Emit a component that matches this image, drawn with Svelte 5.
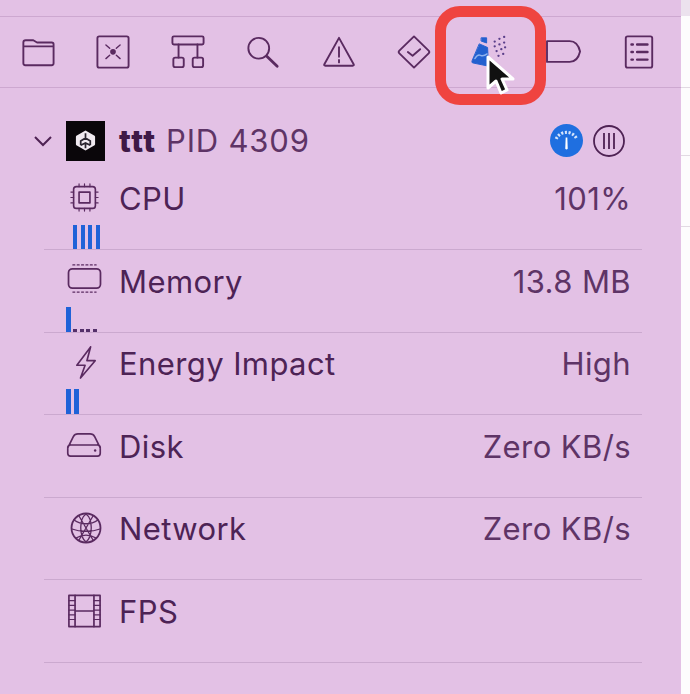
<script>
  const rows = [
    { name: 'CPU', value: '101%', icon: 'cpu', graph: 'cpu' },
    { name: 'Memory', value: '13.8 MB', icon: 'mem', graph: 'mem' },
    { name: 'Energy Impact', value: 'High', icon: 'bolt', graph: 'energy' },
    { name: 'Disk', value: 'Zero KB/s', icon: 'disk' },
    { name: 'Network', value: 'Zero KB/s', icon: 'globe' },
    { name: 'FPS', value: '', icon: 'film' }
  ];
</script>

<div class="page">
  <div class="panel">
    <div class="topstrip"></div>
    <div class="toolbar">
      <svg class="ti" viewBox="0 0 36 36"><path d="M2.500 8q0-2.500 2.500-2.500h8l4 2.500h15.500q2 0 2 2v20q0 2-2 2h-28q-2 0-2-2zM2.500 12h31.500"/></svg>
      <svg class="ti" viewBox="0 0 36 36"><rect x="1.500" y="1.500" width="33" height="33" rx="2"/><path d="M10.500 10.500l4 3.500M25.500 10.500l-4 3.500M10.500 25l4-3.500M25.500 25l-4-3.500" class="tick"/><circle cx="18" cy="17.800" r="3" class="fill"/></svg>
      <svg class="ti" viewBox="0 0 36 36"><rect x="1.500" y="1.500" width="33" height="8.500" rx="1.500"/><path d="M8 10v14M28 10v14"/><rect x="2.500" y="24" width="11" height="10" rx="2"/><rect x="23" y="24" width="11" height="10" rx="2"/></svg>
      <svg class="ti" viewBox="0 0 36 36"><circle cx="13.500" cy="14" r="11"/><path d="M22 22.500l11 10.500" class="thick"/></svg>
      <svg class="ti" viewBox="0 0 36 36"><path d="M18 3l15.500 28q.8 1.500-1 1.500h-29q-1.800 0-1-1.500zM18 13v10M18 26.500v2.500" /></svg>
      <svg class="ti" viewBox="0 0 36 36"><path d="M18 1.500l15.500 15q1.500 1.500 0 3l-15.500 15-15.500-15q-1.500-1.500 0-3zM11.500 18l5 4 8-7"/></svg>
      <svg class="ti clean" viewBox="0 0 36 36">
        <path d="M8 9.500l8.500 3.700 1 19.800-17-3.500q-1-.5-.5-2z" class="blue"/>
        <path d="M10 3h5.500v5.500l-5.500-2z" class="blue"/>
        <path d="M3 25q3-5 6-3.500t7-1.500" class="wave"/>
        <path d="M24 7h.1M29 4h.1M34 2h.1M24 12h.1M29 10h.1M34 8h.1M26 17h.1M31 15h.1M35 13h.1M28 22h.1M33 20h.1" class="dots"/>
      </svg>
      <svg class="ti" viewBox="0 0 36 36"><path d="M0 6.500h24q8.500 0 11 11q-2.500 11-11 11h-24z"/></svg>
      <svg class="ti" viewBox="0 0 36 36"><rect x="4" y="1.500" width="28" height="33" rx="2"/><path d="M10 10h1.500M16 10h11M10 18h1.500M16 18h11M10 26h1.500M16 26h11" class="lines"/></svg>
    </div>
    <div class="content">
      <div class="proc">
        <svg class="chev" viewBox="0 0 20 12"><path d="M2 2l8 8 8-8"/></svg>
        <div class="logo">
          <svg viewBox="0 0 24 24"><path d="M12 1.500l9.500 5.500q.5.300.5 1v8q0 .7-.5 1l-9.500 5.500-9.500-5.500q-.5-.3-.5-1v-8q0-.7.5-1z" class="cube"/><path d="M12 4.500v5M12 9.500l-5 3v4.500M12 9.500l5 3v4.500M7 17l5-2.500 5 2.500M12 14.500V20" class="cubeline"/></svg>
        </div>
        <div class="title"><b>ttt</b> PID 4309</div>
        <div class="ctrls">
          <svg class="gauge" viewBox="0 0 32 32"><circle cx="16" cy="16" r="16" fill="#1f6fe0"/><path d="M14.800 24l.4-11h1.600l.4 11q-1.200 1.500-2.400 0z" fill="#fff"/><path d="M6 14.500a11 11 0 0 1 20 0" fill="none" stroke="#d5e4fb" stroke-width="3" stroke-dasharray="2 1.600"/></svg>
          <svg class="bars" viewBox="0 0 32 32"><circle cx="16" cy="16" r="15"/><path d="M11 8v16M16 8v16M21 8v16"/></svg>
        </div>
      </div>

      {#each rows as r}
        <div class="row">
          <div class="line">
            <span class="ric">
              {#if r.icon === 'cpu'}
                <svg class="i-cpu" viewBox="0 0 32 32"><rect x="4" y="4" width="24" height="24" rx="3"/><rect x="10" y="10" width="12" height="12"/><path class="thin" d="M10 1v3M16 1v3M22 1v3M10 28v3M16 28v3M22 28v3M1 10h3M1 16h3M1 22h3M28 10h3M28 16h3M28 22h3"/></svg>
              {:else if r.icon === 'mem'}
                <svg class="i-mem" viewBox="0 0 36 32"><rect x="1.500" y="6" width="33" height="20" rx="4"/><path class="thin" d="M6 2h24M6 30h24" stroke-dasharray="2 2.500"/></svg>
              {:else if r.icon === 'bolt'}
                <svg class="i-bolt" viewBox="0 0 24 36"><path d="M17 1l-15 20h9l-5 14 16-19h-9l4-15"/></svg>
              {:else if r.icon === 'disk'}
                <svg class="i-disk" viewBox="0 0 38 28"><path d="M1.500 17l6-12q1.500-3 5-3h13q3.500 0 5 3l6 12M1.500 17q0-3 3-3h29q3 0 3 3v6q0 3-3 3h-29q-3 0-3-3z"/><circle cx="31" cy="20" r="1.300" class="fill"/></svg>
              {:else if r.icon === 'globe'}
                <svg class="i-globe" viewBox="0 0 32 32"><circle cx="16" cy="16" r="14.500"/><path class="thin" d="M16 2c-7 5-7 22 0 28M16 2c7 5 7 22 0 28M4 8c7 5 17 5 24 0M2 17c8 3 20 3 28 0M6 26c7-4 13-4 20 0M9 4l14 24M23 4l-14 24"/></svg>
              {:else}
                <svg class="i-film" viewBox="0 0 36 36"><rect x="1.500" y="1.500" width="33" height="33"/><path d="M8 1.500v33M28 1.500v33M8 18h20"/><path class="thin" d="M1.500 7h6.500M1.500 12h6.500M1.500 17h6.500M1.500 22h6.500M1.500 27h6.500M28 7h6.500M28 12h6.500M28 17h6.500M28 22h6.500M28 27h6.500"/></svg>
              {/if}
            </span>
            <span class="name">{r.name}</span>
            <span class="val">{r.value}</span>
          </div>
          {#if r.graph === 'cpu'}
            <div class="graph cpu"><i></i><i></i><i></i><i></i></div>
          {:else if r.graph === 'mem'}
            <div class="graph mem"><i class="tall"></i><i class="dot"></i><i class="dot"></i><i class="dot"></i><i class="dot"></i></div>
          {:else if r.graph === 'energy'}
            <div class="graph energy"><i></i><i></i></div>
          {/if}
        </div>
      {/each}
    </div>

    <div class="cursorbox">
      <svg class="cursor" viewBox="0 0 30 40"><path d="M3 2v31l8-7 5 12 6-3-5-11h11z" fill="#111" stroke="#fff" stroke-width="3" stroke-linejoin="round"/></svg>
    </div>
  </div>
  <div class="side">
    <i class="band"></i>
    <i class="mark m1"></i><i class="mark m2"></i><i class="mark m3"></i>
  </div>
</div>

<style>
  :global(body) { margin: 0; background: #fdfcfd; }
  .page {
    width: 690px; height: 694px; display: flex; overflow: hidden;
    font-family: "Inter", "Liberation Sans", sans-serif; color: #4e2253;
  }
  .panel { position: relative; width: 681px; height: 694px; background: #e3c1e5; flex: none; }
  .side { position: relative; flex: 1; }
  .side i { position: absolute; left: 0; right: 0; display: block; }
  .band { top: 0; height: 16px; background: #ece2ee; }
  .mark { height: 1px; background: #e2dae3; }
  .m1 { top: 87px; }
  .m2 { top: 155px; }
  .m3 { top: 226px; }
  .topstrip { height: 16px; border-bottom: 1.500px solid #cda8d0; }
  .toolbar {
    height: 70.500px; border-bottom: 1.500px solid #cda8d0; box-sizing: border-box;
    display: flex; align-items: center; justify-content: space-between;
    padding: 0 25px 0 21px;
  }
  .ti { width: 34px; height: 34px; fill: none; stroke: #5a2a60; stroke-width: 2; stroke-linecap: round; stroke-linejoin: round; overflow: visible; }
  .fill { fill: #5a2a60; stroke: none; }
  .tick { stroke-width: 1.500; }
  .thick { stroke-width: 3; }
  .lines { stroke-width: 2.500; }
  .blue { fill: #2360cf; stroke: #2360cf; stroke-width: 1; }
  .wave { stroke: #8fb2ee; stroke-width: 1.500; }
  .dots { stroke: #5a3f8a; stroke-width: 2.400; }
  .content { padding: 33px 39px 0 33px; }
  .proc { display: flex; align-items: center; height: 40px; margin-bottom: 7px; }
  .chev { width: 20px; height: 12px; fill: none; stroke: #4e2253; stroke-width: 2; margin-right: 13px; flex: none; }
  .logo { width: 39px; height: 40px; background: #0a060a; flex: none; margin-right: 14px; display: flex; align-items: center; justify-content: center; }
  .logo svg { width: 23px; height: 23px; }
  .cube { fill: #f1eaf1; }
  .cubeline { fill: none; stroke: #2b2530; stroke-width: 1.800; }
  .title { font-size: 31px; letter-spacing: 0.800px; color: #5e3466; line-height: 40px; white-space: nowrap; }
  .title b { color: #3f1946; font-weight: 800; letter-spacing: 1.500px; }
  .ctrls { margin-left: auto; margin-right: 17px; display: flex; gap: 10px; align-items: center; }
  .gauge { width: 33px; height: 33px; }
  .bars { width: 32px; height: 32px; fill: none; stroke: #4e2253; stroke-width: 1.800; }
  .row {
    position: relative; height: 82.500px; box-sizing: border-box; margin-left: 11px;
    border-bottom: 1.500px solid #cba9cf; padding-top: 12px;
  }
  .line { display: flex; align-items: center; height: 38px; padding-right: 11px; }
  .ric { width: 75px; flex: none; display: flex; justify-content: center; padding: 0 20px 0 26px; box-sizing: border-box; }
  .ric svg { fill: none; stroke: #5a2a60; stroke-width: 1.800; stroke-linecap: round; stroke-linejoin: round; overflow: visible; flex: none; }
  .ric .thin { stroke-width: 1.300; }
  .i-cpu { width: 29px; height: 29px; margin-top: -3px; }
  .i-mem { width: 35px; height: 31px; margin-top: -6px; }
  .i-bolt { width: 22px; height: 35px; margin-left: 2px; margin-top: -3px; }
  .i-disk { width: 36px; height: 26px; margin-left: -1px; margin-top: -2px; }
  .i-globe { width: 32px; height: 32px; margin-left: 3px; margin-top: -2px; }
  .i-film { width: 35px; height: 34px; }
  .name { font-size: 31px; letter-spacing: 0.400px; color: #4d2355; white-space: nowrap; }
  .val { margin-left: auto; font-size: 31px; letter-spacing: 0.400px; color: #5e3466; white-space: nowrap; }
  .graph { position: absolute; bottom: 0; display: flex; align-items: flex-end; }
  .graph i { display: block; background: #1f62d8; }
  .cpu { left: 29px; gap: 3.500px; }
  .cpu i { width: 4px; height: 24px; }
  .mem { left: 22px; gap: 2.500px; }
  .mem i.tall { width: 4.500px; height: 25px; }
  .mem i.dot { width: 4px; height: 3px; background: #54306a; }
  .energy { left: 22px; gap: 3.500px; }
  .energy i { width: 4.500px; height: 25px; }
  .cursorbox {
    position: absolute; left: 435px; top: 6px; width: 111px; height: 99px;
    box-sizing: border-box; border: 11px solid #ef4440; border-radius: 25px;
  }
  .cursor { position: absolute; left: 39px; top: 38px; width: 30px; height: 40px; }
</style>
